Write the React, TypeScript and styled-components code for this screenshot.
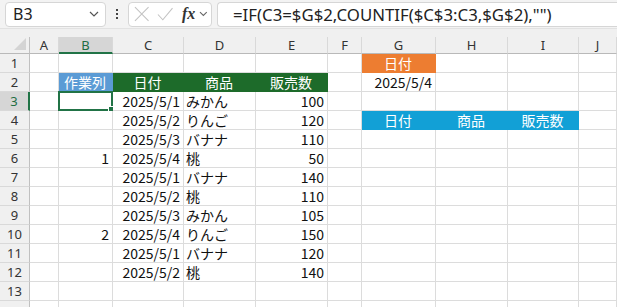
import React from 'react';
import styled, { createGlobalStyle } from 'styled-components';

const GlobalStyle = createGlobalStyle`
  body {
    margin: 0;
    background: #ffffff;
    font-family: 'Noto Sans CJK JP', 'Noto Sans', sans-serif;
    overflow: hidden;
  }
`;

const COLS = [30, 29, 54, 71, 72, 72, 34, 74, 72, 71];
const LETTERS = ['A', 'B', 'C', 'D', 'E', 'F', 'G', 'H', 'I', 'J'];

type CellData = {
  text?: string;
  align?: 'left' | 'right' | 'center';
  bg?: string;
  color?: string;
};

const green = '#1d6b2a';
const blue = '#5b9bd5';
const orange = '#ed7d31';
const cyan = '#12a0d6';

const head = (text: string, bg: string): CellData => ({ text, bg, color: '#ffffff', align: 'center' });
const num = (text: string): CellData => ({ text, align: 'right' });
const word = (text: string): CellData => ({ text, align: 'left' });

const sales: [string, string, string, string][] = [
  ['', '2025/5/1', 'みかん', '100'],
  ['', '2025/5/2', 'りんご', '120'],
  ['', '2025/5/3', 'バナナ', '110'],
  ['1', '2025/5/4', '桃', '50'],
  ['', '2025/5/1', 'バナナ', '140'],
  ['', '2025/5/2', '桃', '110'],
  ['', '2025/5/3', 'みかん', '105'],
  ['2', '2025/5/4', 'りんご', '150'],
  ['', '2025/5/1', 'バナナ', '120'],
  ['', '2025/5/2', '桃', '140'],
];

// index by column: A..J, 13 visible rows plus one cut off at the bottom
const buildRows = (): CellData[][] => {
  const rows: CellData[][] = [];
  for (let r = 1; r <= 14; r++) rows.push(Array.from({ length: 10 }, () => ({})));
  rows[0][6] = head('日付', orange);
  rows[1][1] = head('作業列', blue);
  rows[1][2] = head('日付', green);
  rows[1][3] = head('商品', green);
  rows[1][4] = head('販売数', green);
  rows[1][6] = num('2025/5/4');
  rows[3][6] = head('日付', cyan);
  rows[3][7] = head('商品', cyan);
  rows[3][8] = head('販売数', cyan);
  sales.forEach(([work, date, item, count], i) => {
    const row = rows[i + 2];
    row[1] = num(work);
    row[2] = num(date);
    row[3] = word(item);
    row[4] = num(count);
  });
  return rows;
};

const rows = buildRows();

const App = () => (
  <>
    <GlobalStyle />
    <Toolbar>
      <NameBox>
        <span>B3</span>
        <svg width="10" height="6" viewBox="0 0 10 6">
          <path d="M1 1l4 4 4-4" fill="none" stroke="#555" strokeWidth="1.2" />
        </svg>
      </NameBox>
      <Dots>
        <i />
        <i />
        <i />
      </Dots>
      <ActionBox>
        <svg width="16" height="16" viewBox="0 0 16 16">
          <path d="M1 1l14 14M15 1L1 15" stroke="#c3c3c3" strokeWidth="1.1" />
        </svg>
        <svg width="17" height="14" viewBox="0 0 17 14">
          <path d="M1 7.5l5 5.5L16 1" fill="none" stroke="#c3c3c3" strokeWidth="1.1" />
        </svg>
        <Fx>fx</Fx>
        <svg width="9" height="6" viewBox="0 0 9 6">
          <path d="M1 1l3.5 3.5L8 1" fill="none" stroke="#666" strokeWidth="1.1" />
        </svg>
      </ActionBox>
      <FormulaBox>=IF(C3=$G$2,COUNTIF($C$3:C3,$G$2),"")</FormulaBox>
    </Toolbar>
    <Sheet>
      <Grid>
        <Corner>
          <svg width="12" height="12" viewBox="0 0 12 12">
            <path d="M12 0v12H0z" fill="#d4d4d4" />
          </svg>
        </Corner>
        {LETTERS.map((l, i) => (
          <ColHead key={l} $selected={i === 1}>
            {l}
          </ColHead>
        ))}
        {rows.map((row, r) => (
          <React.Fragment key={r}>
            <RowHead $selected={r === 2}>{r < 13 ? r + 1 : ''}</RowHead>
            {row.map((c, ci) => (
              <Cell key={ci} $align={c.align ?? 'left'} $bg={c.bg} $color={c.color}>
                {c.text}
                {r === 2 && ci === 1 && <Selection />}
              </Cell>
            ))}
          </React.Fragment>
        ))}
      </Grid>
    </Sheet>
  </>
);

export default App;

const Toolbar = styled.div`
  display: flex;
  align-items: center;
  height: 29px;
  padding: 0 0 0 5px;
  background: #f3f3f3;
  border-bottom: 1px solid #e2e2e2;
  box-sizing: border-box;
`;

const boxStyle = `
  display: flex;
  align-items: center;
  height: 25px;
  background: #ffffff;
  border: 1px solid #d6d6d6;
  border-radius: 4px;
  box-sizing: border-box;
`;

const NameBox = styled.div`
  ${boxStyle}
  width: 101px;
  justify-content: space-between;
  padding: 0 6px 0 7px;
  font-family: 'Noto Sans', sans-serif;
  font-size: 16px;
  color: #222;
`;

const Dots = styled.div`
  display: flex;
  flex-direction: column;
  gap: 2px;
  width: 22px;
  align-items: center;

  i {
    width: 2px;
    height: 2px;
    background: #444;
  }
`;

const ActionBox = styled.div`
  ${boxStyle}
  width: 84px;
  padding: 0 3px 0 5px;
  gap: 7px;
`;

const Fx = styled.span`
  font-family: 'Liberation Serif', serif;
  font-style: italic;
  font-weight: bold;
  font-size: 16px;
  color: #333;
  margin-left: 2px;
  margin-right: -3px;
`;

const FormulaBox = styled.div`
  ${boxStyle}
  flex: 1;
  margin-left: 5px;
  padding-left: 15px;
  border-right: none;
  border-radius: 4px 0 0 4px;
  font-family: 'Noto Sans', sans-serif;
  font-size: 16.8px;
  color: #222;
  white-space: nowrap;
`;

const Sheet = styled.div`
  padding-top: 8px;
  background: #f0f0f0;
`;

const Grid = styled.div`
  display: grid;
  grid-template-columns: ${COLS.map((w) => `${w}px`).join(' ')} 1fr;
  grid-template-rows: 17px;
  grid-auto-rows: 19px;
`;

const Corner = styled.div`
  display: flex;
  align-items: flex-end;
  justify-content: flex-end;
  padding: 0 3px 3px 0;
  background: #f0f0f0;
  border-right: 1px solid #c0c0c0;
  border-bottom: 1px solid #b9b9b9;
  box-sizing: border-box;
`;

const ColHead = styled.div<{ $selected: boolean }>`
  display: flex;
  align-items: center;
  justify-content: center;
  font-family: 'Noto Sans', sans-serif;
  font-size: 13px;
  color: ${(p) => (p.$selected ? '#1f6e43' : '#333')};
  background: ${(p) => (p.$selected ? '#d6d6d6' : '#f0f0f0')};
  border-right: 1px solid #d9d9d9;
  border-bottom: ${(p) => (p.$selected ? '2px solid #217346' : '1px solid #b9b9b9')};
  box-sizing: border-box;
`;

const RowHead = styled.div<{ $selected: boolean }>`
  display: flex;
  align-items: center;
  justify-content: center;
  font-family: 'Noto Sans', sans-serif;
  font-size: 13px;
  color: ${(p) => (p.$selected ? '#1f6e43' : '#333')};
  background: ${(p) => (p.$selected ? '#d6d6d6' : '#f0f0f0')};
  border-right: ${(p) => (p.$selected ? '2px solid #217346' : '1px solid #c0c0c0')};
  border-bottom: 1px solid #d9d9d9;
  box-sizing: border-box;
`;

const Cell = styled.div<{ $align: string; $bg?: string; $color?: string }>`
  position: relative;
  display: flex;
  align-items: center;
  justify-content: ${(p) =>
    p.$align === 'right' ? 'flex-end' : p.$align === 'center' ? 'center' : 'flex-start'};
  padding: 0 3px 0 2px;
  font-size: 14px;
  color: ${(p) => p.$color ?? '#111'};
  background: ${(p) => p.$bg ?? '#ffffff'};
  border-right: 1px solid ${(p) => p.$bg ?? '#dcdcdc'};
  border-bottom: 1px solid ${(p) => p.$bg ?? '#dcdcdc'};
  box-sizing: border-box;
  white-space: nowrap;
  overflow: visible;
`;

const Selection = styled.div`
  position: absolute;
  left: -1px;
  top: -1px;
  right: -1px;
  bottom: -1px;
  border: 2px solid #217346;

  &::after {
    content: '';
    position: absolute;
    right: -4px;
    bottom: -4px;
    width: 5px;
    height: 5px;
    background: #217346;
    border: 1px solid #ffffff;
  }
`;
